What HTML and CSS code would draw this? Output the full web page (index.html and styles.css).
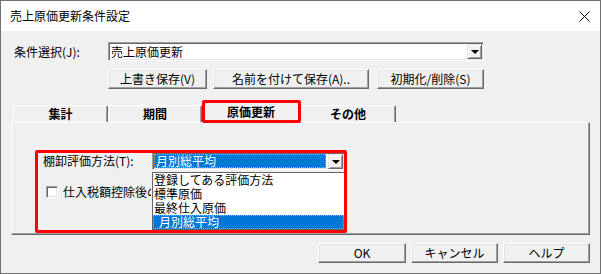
FILE: index.html
```html
<!DOCTYPE html>
<html lang="ja">
<head>
    <meta charset="UTF-8">
    <title>売上原価更新条件設定</title>
    <link rel="stylesheet" href="styles.css">
</head>
<body>
    <div class="window">
        <div class="titlebar">
            <span class="title">売上原価更新条件設定</span>
            <svg class="close" width="11" height="11" viewBox="0 0 11 11">
                <path d="M0.5 0.5 L10.5 10.5 M10.5 0.5 L0.5 10.5" stroke="#000" stroke-width="1" fill="none"/>
            </svg>
        </div>

        <div class="content">
            <div class="cond-row">
                <span class="cond-label">条件選択(J):</span>
                <div class="combo wide">
                    <span class="combo-text">売上原価更新</span>
                    <span class="drop-btn"><i class="arrow"></i></span>
                </div>
            </div>

            <div class="btn-row">
                <button class="btn w-save">上書き保存(V)</button>
                <button class="btn w-saveas">名前を付けて保存(A)..</button>
                <button class="btn w-init">初期化/削除(S)</button>
            </div>

            <div class="tabs">
                <div class="tab t1">集計</div>
                <div class="tab t2">期間</div>
                <div class="tab active">原価更新</div>
                <div class="tab t4">その他</div>
            </div>

            <div class="panel">
                <div class="field-row">
                    <span class="field-label">棚卸評価方法(T):</span>
                    <div class="combo method">
                        <span class="combo-text selected">月別総平均</span>
                        <span class="drop-btn"><i class="arrow"></i></span>
                        <ul class="droplist">
                            <li>登録してある評価方法</li>
                            <li>標準原価</li>
                            <li>最終仕入原価</li>
                            <li class="current">月別総平均</li>
                        </ul>
                    </div>
                </div>
                <label class="check-row">
                    <span class="checkbox"></span>
                    <span class="check-text">仕入税額控除後の単価を使用</span>
                </label>
            </div>

            <div class="footer">
                <button class="btn w-foot">OK</button>
                <button class="btn w-foot">キャンセル</button>
                <button class="btn w-foot">ヘルプ</button>
            </div>
        </div>

        <div class="mark mark-tab"></div>
        <div class="mark mark-field"></div>
    </div>
</body>
</html>
```

FILE: styles.css
```css
body {
    margin: 0;
    background: #f0f0f0;
    font-family: "Noto Sans CJK JP", "Noto Sans", sans-serif;
    font-size: 12px;
    color: #000;
}
.window {
    position: relative;
    width: 601px;
    height: 274px;
    box-sizing: border-box;
    border: 1px solid #707070;
    background: #f0f0f0;
    display: flex;
    flex-direction: column;
}
.titlebar {
    height: 30px;
    background: #fff;
    display: flex;
    align-items: center;
    justify-content: space-between;
    padding: 0 10px 0 9px;
    flex-shrink: 0;
}
.title {
    font-size: 12px;
    line-height: 14px;
}
.content {
    padding: 11px 10px 0 10px;
}
.cond-row {
    display: flex;
    align-items: center;
    height: 19px;
    padding-left: 3px;
}
.cond-label {
    width: 94px;
    line-height: 14px;
}

/* sunken combo box */
.combo {
    position: relative;
    display: flex;
    align-items: center;
    box-sizing: border-box;
    background: #fff;
    border: 1px solid;
    border-color: #a0a0a0 #fff #fff #a0a0a0;
    box-shadow: inset 1px 1px #696969, inset -1px -1px #e3e3e3;
    padding: 1px;
}
.combo.wide {
    width: 376px;
    height: 19px;
}
.combo.method {
    width: 193px;
    height: 18px;
}
.combo-text {
    flex: 1;
    line-height: 14px;
    padding-left: 1px;
    align-self: stretch;
    display: flex;
    align-items: center;
}
.combo-text.selected {
    background: #0078d7;
    color: #fff;
    outline: 1px dotted #f0a040;
    outline-offset: -1px;
    margin-right: 2px;
    padding-left: 2px;
}
.drop-btn {
    width: 15px;
    height: 15px;
    box-sizing: border-box;
    background: #f0f0f0;
    border: 1px solid;
    border-color: #e3e3e3 #696969 #696969 #e3e3e3;
    box-shadow: inset 1px 1px #fff, inset -1px -1px #a0a0a0;
    display: flex;
    align-items: center;
    justify-content: center;
}
.arrow {
    width: 0;
    height: 0;
    border-left: 4px solid transparent;
    border-right: 4px solid transparent;
    border-top: 4px solid #000;
    margin-top: 1px;
}
.droplist {
    position: absolute;
    top: 19px;
    left: -1px;
    width: 193px;
    height: 58px;
    box-sizing: border-box;
    margin: 0;
    padding: 0;
    list-style: none;
    background: #fff;
    border: 1px solid #646464;
    z-index: 2;
}
.droplist li {
    height: 14px;
    line-height: 14px;
    padding-left: 1px;
    font-size: 12px;
    white-space: nowrap;
}
.droplist li.current {
    background: #0078d7;
    color: #fff;
    outline: 1px dotted #f0a040;
    outline-offset: -1px;
    padding-left: 6px;
}

/* buttons */
.btn-row {
    display: flex;
    gap: 6px;
    margin-top: 8px;
    padding-left: 97px;
}
.btn {
    height: 20px;
    box-sizing: border-box;
    padding: 0;
    font-family: inherit;
    font-size: 12px;
    line-height: 14px;
    color: #000;
    background: #f0f0f0;
    border: 1px solid;
    border-color: #fff #696969 #696969 #fff;
    box-shadow: inset -1px -1px #a0a0a0, inset 1px 1px #e3e3e3;
}
.w-save { width: 99px; }
.w-saveas { width: 156px; }
.w-init { width: 107px; margin-left: 2px; }

/* tabs */
.tabs {
    display: flex;
    align-items: flex-end;
    height: 20px;
    margin-top: 13px;
    margin-left: 2px;
    position: relative;
    z-index: 1;
}
.tab {
    height: 17px;
    box-sizing: border-box;
    text-align: center;
    font-weight: bold;
    font-size: 12px;
    line-height: 15px;
    border-top: 1px solid #fff;
    border-left: 1px solid #fff;
    border-right: 1px solid #696969;
    box-shadow: inset -1px 0 #a0a0a0;
    border-radius: 2px 2px 0 0;
}
.t1 { width: 95px; }
.t2 { width: 94px; }
.t4 { width: 96px; }
.tab.active {
    width: 98px;
    height: 21px;
    line-height: 17px;
    margin-bottom: -1px;
    background: #f0f0f0;
}

.panel {
    height: 113px;
    box-sizing: border-box;
    border: 1px solid;
    border-color: #fff #696969 #696969 #fff;
    box-shadow: inset -1px -1px #a0a0a0;
    padding: 29px 0 0 31px;
}
.field-row {
    display: flex;
    align-items: center;
}
.field-label {
    width: 109px;
    line-height: 14px;
}
.check-row {
    display: flex;
    align-items: center;
    gap: 5px;
    margin-top: 15px;
    margin-left: 3px;
    line-height: 14px;
}
.check-text {
    width: 88px;
    overflow: hidden;
    white-space: nowrap;
}
.checkbox {
    width: 12px;
    height: 12px;
    box-sizing: border-box;
    background: #fff;
    border: 1px solid;
    border-color: #a0a0a0 #fff #fff #a0a0a0;
    box-shadow: inset 1px 1px #696969, inset -1px -1px #e3e3e3;
}

.footer {
    display: flex;
    justify-content: flex-end;
    gap: 5px;
    margin-top: 8px;
}
.w-foot { width: 87px; }
.w-foot:first-child { width: 88px; }

/* red annotation frames */
.mark {
    position: absolute;
    box-sizing: border-box;
    border: 3px solid #f00;
    border-radius: 2px;
    z-index: 3;
}
.mark-tab {
    left: 201px;
    top: 99px;
    width: 99px;
    height: 23px;
}
.mark-field {
    left: 34px;
    top: 149px;
    width: 312px;
    height: 83px;
}
```
